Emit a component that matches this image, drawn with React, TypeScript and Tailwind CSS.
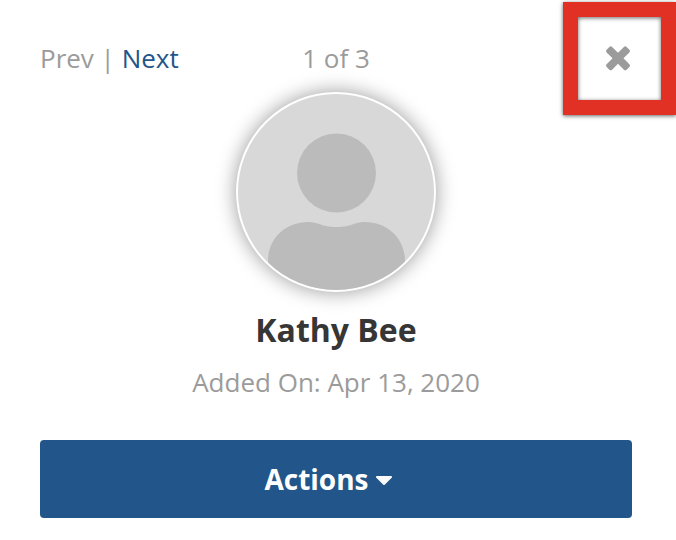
import { useState } from "react";

interface Contact {
    name: string;
    addedOn: string;
}

const contact: Contact = { name: "Kathy Bee", addedOn: "Apr 13, 2020" };

function Avatar() {
    return (
        <div className="w-[200px] h-[200px] shrink-0 rounded-full border-2 border-white bg-[#d8d8d8] overflow-hidden shadow-[0_0_20px_rgba(0,0,0,0.4)]">
            <svg viewBox="0 0 196 196" className="block w-full h-full" fill="#bbbbbb">
                <circle cx="98.5" cy="79" r="39.5" />
                <path d="M30 196V167C30 144 48 128 70 128C81 128 83 133 98.5 133C114 133 116 128 127 128C149 128 167 144 167 167V196Z" />
            </svg>
        </div>
    );
}

function App() {
    const [open, setOpen] = useState<boolean>(false);

    return (
        <div className="relative w-[676px] h-[540px] overflow-hidden bg-white font-['Open_Sans',sans-serif] text-[#9b9b9b]">
            <div className="flex flex-col items-center h-full pl-10 pr-11">
                <div className="grid grid-cols-3 w-full h-[92px] pt-10 text-[26px] leading-[36px]">
                    <div className="whitespace-nowrap">
                        Prev | <a href="#" className="text-[#22568b]">Next</a>
                    </div>
                    <div className="text-center">1 of 3</div>
                </div>

                <Avatar />

                <h1 className="mt-4 text-[32px] leading-[44px] font-bold text-[#363636]">{contact.name}</h1>
                <p className="mt-3 text-[26px] leading-[36px]">Added On: {contact.addedOn}</p>

                <button
                    className="flex items-center justify-center w-full h-[78px] mt-10 pr-4 rounded-[4px] bg-[#22568b] text-white text-[28px] font-bold"
                    onClick={() => setOpen(!open)}
                    aria-expanded={open}
                >
                    Actions
                    <svg viewBox="384 640 1024 576" className="w-4 h-[9px] ml-[7px] mt-[3px]" fill="currentColor">
                        <path d="M1408 704q0 26-19 45l-448 448q-19 19-45 19t-45-19l-448-448q-19-19-19-45t19-45 45-19h896q26 0 45 19t19 45z" />
                    </svg>
                </button>
            </div>

            {/* Highlight around the close button */}
            <div className="absolute left-[563px] top-[2px] w-[113px] h-[113px] border-[15px] border-[#e03124] shadow-[0_1px_4px_rgba(0,0,0,0.6),inset_0_1px_4px_rgba(0,0,0,0.6)] flex items-center justify-center">
                <button aria-label="Close" className="pr-1 pb-1">
                    <svg viewBox="0 0 1792 1792" className="block w-9 h-9" fill="#9b9b9b">
                        <path d="M1490 1322q0 40-28 68l-136 136q-28 28-68 28t-68-28l-294-294-294 294q-28 28-68 28t-68-28l-136-136q-28-28-28-68t28-68l294-294-294-294q-28-28-28-68t28-68l136-136q28-28 68-28t68 28l294 294 294-294q28-28 68-28t68 28l136 136q28 28 28 68t-28 68l-294 294 294 294q28 28 28 68z" />
                    </svg>
                </button>
            </div>
        </div>
    );
}

export default App;
